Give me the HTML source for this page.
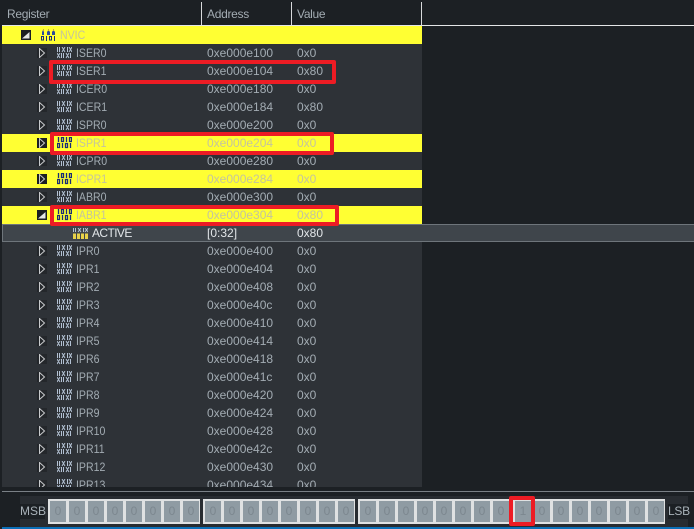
<!DOCTYPE html>
<html><head><meta charset="utf-8"><style>
html,body{margin:0;padding:0;width:694px;height:529px;overflow:hidden;background:#1c2024}
body{position:relative;font:12px/18px "Liberation Sans",sans-serif;color:#a3acb3}
div,span,svg{position:absolute}
#tree{left:2px;top:26px;width:420px;height:461px;background:#2e3237;overflow:hidden}
.r{left:-2px;width:424px;height:18px}
.y{background:#ffff33;color:#c4c49e}
.e{left:37px;top:4px;width:10px;height:10px}
.i{left:57px;top:3px;width:15px;height:12px}
.n{left:76px;top:0;white-space:nowrap;transform:scaleX(.88);transform-origin:0 50%}
.a{left:207px;top:0}
.v{left:297px;top:0}
.h{top:5px;color:#a3acb3;line-height:18px;letter-spacing:-.3px}
.s{top:2px;width:1px;height:23px;background:#d8dadc}
.red{border:4px solid #ed1c24;border-radius:2px;box-sizing:border-box}
.g{top:499px;height:25px;width:152px;background:#dfe1e2}
.c{top:2px;height:21px;width:16px;background:#8f9ba3;color:#7c878f;text-align:center;line-height:21px;font-size:12px}
</style></head><body>
<svg width="0" height="0" style="position:absolute"><defs>
<symbol id="k" viewBox="0 0 15 12"><path fill="none" stroke="#b4c2d4" stroke-width="1" d="M.5 0v5M2.500 0v5M5 0l3 5M8 0l-3 5M10.500 0v5M12 0l3 5M15 0l-3 5M0 6l3 5M3 6l-3 5M4.500 6v5M6.500 6v5M9 6l3 5M12 6l-3 5M13.500 6v5"/></symbol>
<symbol id="b" viewBox="0 0 15 12"><path fill="none" stroke="#1a2d78" stroke-width="1.300" d="M1.500 0v5M4.500.5h2v4h-2zM9.500 0v5M12.500.5h2v4h-2zM.5 6.500h2v4h-2zM5.500 6v5M8.500 6.500h2v4h-2zM13.500 6v5"/></symbol>
<symbol id="o" viewBox="0 0 10 10"><rect width="10" height="10" fill="#24272b"/><path d="M2.500 .5v9l5-4.500z" fill="none" stroke="#c8cacc"/></symbol>
<symbol id="p" viewBox="0 0 10 10"><rect width="10" height="10" fill="#1c1f23"/><path d="M2.500 .5v9l5-4.500z" fill="none" stroke="#c8cacc"/></symbol>
<symbol id="d" viewBox="0 0 10 10"><rect width="10" height="10" fill="#1c1f23"/><path d="M1 8.500h7.500V2z" fill="#e4e6e7"/></symbol>
</defs></svg>

<div class="h" style="left:7px;top:5px">Register</div>
<div class="h" style="left:207px">Address</div>
<div class="h" style="left:297px">Value</div>
<div class="s" style="left:201px"></div><div class="s" style="left:291px"></div><div class="s" style="left:421px"></div>
<div style="left:2px;top:25px;width:692px;height:1px;background:#e4e6e7"></div>

<div id="tree">
<div class="r y" style="top:0"><svg style="left:21px;top:4px" width="10" height="10"><use href="#d"/></svg>
<svg style="left:41px;top:3px" width="15" height="12" viewBox="0 0 15 12"><path d="M1 6V3l1-2 1 2v3zM6 6V3l1.500-2L9 3v3zM11 6V3l1.500-2L14 3v3z" fill="#2a4a9c"/><path d="M2 0h1v2H2zM7 0h1v2H7zM12 0h1v2h-1z" fill="#c9a63a"/><path fill="none" stroke="#1a2d78" d="M.5 7.500h2v3.500h-2zM5.500 7v5M8.500 7.500h2v3.500h-2zM13.500 7v5"/></svg>
<span class="n" style="left:60px">NVIC</span></div>

<div class="r" style="top:18px"><svg class="e"><use href="#o"/></svg><svg class="i"><use href="#k"/></svg><span class="n">ISER0</span><span class="a">0xe000e100</span><span class="v">0x0</span></div>
<div class="r" style="top:36px"><svg class="e"><use href="#o"/></svg><svg class="i"><use href="#k"/></svg><span class="n">ISER1</span><span class="a">0xe000e104</span><span class="v">0x80</span></div>
<div class="r" style="top:54px"><svg class="e"><use href="#o"/></svg><svg class="i"><use href="#k"/></svg><span class="n">ICER0</span><span class="a">0xe000e180</span><span class="v">0x0</span></div>
<div class="r" style="top:72px"><svg class="e"><use href="#o"/></svg><svg class="i"><use href="#k"/></svg><span class="n">ICER1</span><span class="a">0xe000e184</span><span class="v">0x80</span></div>
<div class="r" style="top:90px"><svg class="e"><use href="#o"/></svg><svg class="i"><use href="#k"/></svg><span class="n">ISPR0</span><span class="a">0xe000e200</span><span class="v">0x0</span></div>
<div class="r y" style="top:108px"><svg class="e"><use href="#p"/></svg><svg class="i"><use href="#b"/></svg><span class="n">ISPR1</span><span class="a">0xe000e204</span><span class="v">0x0</span></div>
<div class="r" style="top:126px"><svg class="e"><use href="#o"/></svg><svg class="i"><use href="#k"/></svg><span class="n">ICPR0</span><span class="a">0xe000e280</span><span class="v">0x0</span></div>
<div class="r y" style="top:144px"><svg class="e"><use href="#p"/></svg><svg class="i"><use href="#b"/></svg><span class="n">ICPR1</span><span class="a">0xe000e284</span><span class="v">0x0</span></div>
<div class="r" style="top:162px"><svg class="e"><use href="#o"/></svg><svg class="i"><use href="#k"/></svg><span class="n">IABR0</span><span class="a">0xe000e300</span><span class="v">0x0</span></div>
<div class="r y" style="top:180px"><svg class="e"><use href="#d"/></svg><svg class="i"><use href="#b"/></svg><span class="n">IABR1</span><span class="a">0xe000e304</span><span class="v">0x80</span></div>

<div class="r" style="top:216px"><svg class="e"><use href="#o"/></svg><svg class="i"><use href="#k"/></svg><span class="n">IPR0</span><span class="a">0xe000e400</span><span class="v">0x0</span></div>
<div class="r" style="top:234px"><svg class="e"><use href="#o"/></svg><svg class="i"><use href="#k"/></svg><span class="n">IPR1</span><span class="a">0xe000e404</span><span class="v">0x0</span></div>
<div class="r" style="top:252px"><svg class="e"><use href="#o"/></svg><svg class="i"><use href="#k"/></svg><span class="n">IPR2</span><span class="a">0xe000e408</span><span class="v">0x0</span></div>
<div class="r" style="top:270px"><svg class="e"><use href="#o"/></svg><svg class="i"><use href="#k"/></svg><span class="n">IPR3</span><span class="a">0xe000e40c</span><span class="v">0x0</span></div>
<div class="r" style="top:288px"><svg class="e"><use href="#o"/></svg><svg class="i"><use href="#k"/></svg><span class="n">IPR4</span><span class="a">0xe000e410</span><span class="v">0x0</span></div>
<div class="r" style="top:306px"><svg class="e"><use href="#o"/></svg><svg class="i"><use href="#k"/></svg><span class="n">IPR5</span><span class="a">0xe000e414</span><span class="v">0x0</span></div>
<div class="r" style="top:324px"><svg class="e"><use href="#o"/></svg><svg class="i"><use href="#k"/></svg><span class="n">IPR6</span><span class="a">0xe000e418</span><span class="v">0x0</span></div>
<div class="r" style="top:342px"><svg class="e"><use href="#o"/></svg><svg class="i"><use href="#k"/></svg><span class="n">IPR7</span><span class="a">0xe000e41c</span><span class="v">0x0</span></div>
<div class="r" style="top:360px"><svg class="e"><use href="#o"/></svg><svg class="i"><use href="#k"/></svg><span class="n">IPR8</span><span class="a">0xe000e420</span><span class="v">0x0</span></div>
<div class="r" style="top:378px"><svg class="e"><use href="#o"/></svg><svg class="i"><use href="#k"/></svg><span class="n">IPR9</span><span class="a">0xe000e424</span><span class="v">0x0</span></div>
<div class="r" style="top:396px"><svg class="e"><use href="#o"/></svg><svg class="i"><use href="#k"/></svg><span class="n">IPR10</span><span class="a">0xe000e428</span><span class="v">0x0</span></div>
<div class="r" style="top:414px"><svg class="e"><use href="#o"/></svg><svg class="i"><use href="#k"/></svg><span class="n">IPR11</span><span class="a">0xe000e42c</span><span class="v">0x0</span></div>
<div class="r" style="top:432px"><svg class="e"><use href="#o"/></svg><svg class="i"><use href="#k"/></svg><span class="n">IPR12</span><span class="a">0xe000e430</span><span class="v">0x0</span></div>
<div class="r" style="top:450px"><svg class="e"><use href="#o"/></svg><svg class="i"><use href="#k"/></svg><span class="n">IPR13</span><span class="a">0xe000e434</span><span class="v">0x0</span></div>
</div>

<div style="left:2px;top:224px;width:692px;height:18px;background:#3f454b;border-top:1px solid #6e757b;border-bottom:1px solid #6e757b;border-left:1px solid #6e757b;box-sizing:border-box;color:#e2e6e9;line-height:16px">
<svg style="left:70px;top:3px" width="15" height="11" viewBox="0 0 15 11"><path fill="none" stroke="#b4c2d4" d="M.5 0v4M2.500 0v4M5 0l3 4M8 0l-3 4M10.500 0v4M12 0l3 4M15 0l-3 4"/><path fill="#e8d24a" d="M0 5.500h3V11H0zM4 5.500h3V11H4zM8 5.500h3V11H8zM12 5.500h3V11h-3z"/></svg>
<span style="left:89px;top:0;letter-spacing:-.6px">ACTIVE</span><span style="left:204px;top:0">[0:32]</span><span style="left:294px;top:0">0x80</span></div>

<div class="red" style="left:49px;top:60px;width:287px;height:24px"></div>
<div class="red" style="left:50px;top:132px;width:284px;height:23px"></div>
<div class="red" style="left:50px;top:205px;width:289px;height:21px"></div>

<div style="left:0;top:487px;width:694px;height:42px;background:#1c2024"></div>
<div style="left:2px;top:491px;width:692px;height:1px;background:#7a8086"></div>
<div style="left:20px;top:496px;width:668px;height:31px;background:#282c31"></div>
<div style="left:2px;top:527px;width:692px;height:2px;background:#0b6fb8"></div>
<div style="left:20px;top:504px;width:25px;height:15px;background:#1c2024;color:#a9b2b9;line-height:15px">MSB</div>
<div style="left:668px;top:504px;width:20px;height:15px;background:#1c2024;color:#a9b2b9;line-height:15px;letter-spacing:-.3px">LSB</div>

<div class="g" style="left:48px"><div class="c" style="left:2px">0</div><div class="c" style="left:21px">0</div><div class="c" style="left:40px">0</div><div class="c" style="left:59px">0</div><div class="c" style="left:78px">0</div><div class="c" style="left:97px">0</div><div class="c" style="left:116px">0</div><div class="c" style="left:135px">0</div></div>
<div class="g" style="left:203px"><div class="c" style="left:2px">0</div><div class="c" style="left:21px">0</div><div class="c" style="left:40px">0</div><div class="c" style="left:59px">0</div><div class="c" style="left:78px">0</div><div class="c" style="left:97px">0</div><div class="c" style="left:116px">0</div><div class="c" style="left:135px">0</div></div>
<div class="g" style="left:358px"><div class="c" style="left:2px">0</div><div class="c" style="left:21px">0</div><div class="c" style="left:40px">0</div><div class="c" style="left:59px">0</div><div class="c" style="left:78px">0</div><div class="c" style="left:97px">0</div><div class="c" style="left:116px">0</div><div class="c" style="left:135px">0</div></div>
<div class="g" style="left:513px"><div class="c" style="left:2px">1</div><div class="c" style="left:21px">0</div><div class="c" style="left:40px">0</div><div class="c" style="left:59px">0</div><div class="c" style="left:78px">0</div><div class="c" style="left:97px">0</div><div class="c" style="left:116px">0</div><div class="c" style="left:135px">0</div></div>
<div class="red" style="left:509px;top:496px;width:26px;height:30px"></div>
</body></html>
